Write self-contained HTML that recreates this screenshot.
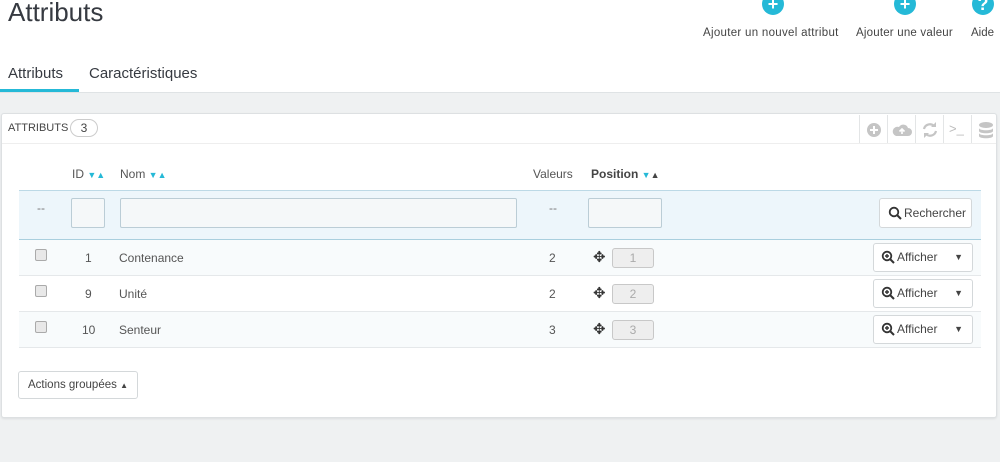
<!DOCTYPE html>
<html><head><meta charset="utf-8"><style>
*{box-sizing:border-box;margin:0;padding:0}
body{width:1000px;height:462px;overflow:hidden;background:#eff1f2;font-family:"Liberation Sans",sans-serif;color:#555;position:relative;font-size:12px}
.top{position:absolute;left:0;top:0;width:1000px;height:93px;background:#fff;border-bottom:1px solid #dfe3e5}
.a{position:absolute;white-space:nowrap}
h1{position:absolute;left:8px;top:-3px;font-size:26px;font-weight:normal;color:#363a41}
.tb{font-size:11.5px;color:#444}
.ic{position:absolute;width:22px;height:22px;border-radius:50%;background:#25b9d7;color:#fff;font-weight:bold;text-align:center;line-height:22px;font-size:18px}
.tab{font-size:15px;color:#363a41}
.panel{position:absolute;left:1px;top:113px;width:996px;height:305px;background:#fff;border:1px solid #dde0e2;border-radius:3px;box-shadow:0 1px 2px rgba(0,0,0,.08)}
.inp{position:absolute;background:#f5f8f9;border:1px solid #bbcdd6;border-radius:2px;height:30px}
.row{position:absolute;left:17px;width:962px;height:36px;border-bottom:1px solid #e5e8ea}
.cb{position:absolute;width:12px;height:12px;border:1px solid #aaa;border-radius:2px;background:#e8e8e8}
.pos{position:absolute;width:42px;height:20px;border:1px solid #c8c8c8;border-radius:3px;background:#eee;color:#aaa;text-align:center;line-height:18px}
.btn{position:absolute;border:1px solid #d4d8da;border-radius:3px;background:#fff;color:#444;font-size:12px}
.hi{position:absolute;width:28px;height:28px;border-left:1px solid #e3e5e6;top:1px;color:#bbb}
.mg{vertical-align:-3px;margin-right:2px}
</style></head><body>
<div class="top">
<h1>Attributs</h1>
<div class="ic" style="left:762px;top:-7px">+</div>
<div class="ic" style="left:894px;top:-7px">+</div>
<div class="ic" style="left:972px;top:-7px">?</div>
<div class="a tb" style="left:703px;top:27px;letter-spacing:0.3px">Ajouter un nouvel attribut</div>
<div class="a tb" style="left:856px;top:27px;letter-spacing:0.2px">Ajouter une valeur</div>
<div class="a tb" style="left:971px;top:27px">Aide</div>
<div class="a tab" style="left:8px;top:65px">Attributs</div>
<div class="a tab" style="left:89px;top:65px">Caractéristiques</div>
<div class="a" style="left:0;top:89px;width:79px;height:3px;background:#25b9d7"></div>
</div>
<div class="panel">
<div class="a" style="left:0;top:0;width:994px;height:30px;border-bottom:1px solid #eee"></div>
<div class="a" style="left:6px;top:8px;font-size:11px;color:#444">ATTRIBUTS</div>
<div class="a" style="left:68px;top:5px;width:28px;height:18px;border:1px solid #ccc;border-radius:9px;text-align:center;line-height:16px;color:#444;font-size:12px">3</div>
<div class="hi" style="left:857px"><svg width="28" height="28"><circle cx="14" cy="15" r="7" fill="#c5c5c5"/><path d="M14 11v8M10 15h8" stroke="#fff" stroke-width="2"/></svg></div>
<div class="hi" style="left:885px"><svg width="28" height="28"><path d="M8 21h12a4 4 0 0 0 0-8a5 5 0 0 0-9-1a4 4 0 0 0-3 9z" fill="#c5c5c5"/><path d="M14 19v-5M11.5 16.5l2.5-2.5 2.5 2.5" stroke="#fff" stroke-width="1.6" fill="none"/></svg></div>
<div class="hi" style="left:913px"><svg width="28" height="28"><path d="M8 14a6 6 0 0 1 10-3M20 16a6 6 0 0 1-10 3" stroke="#c5c5c5" stroke-width="2.2" fill="none"/><path d="M20 7v5h-5M8 23v-5h5" fill="#c5c5c5"/></svg></div>
<div class="hi" style="left:941px;font-size:13px;line-height:28px;padding-left:5px">&gt;_</div>
<div class="hi" style="left:969px"><svg width="28" height="28"><ellipse cx="14" cy="10" rx="7" ry="3" fill="#c5c5c5"/><path d="M7 13c0 3 14 3 14 0v3c0 3-14 3-14 0zM7 18c0 3 14 3 14 0v3c0 3-14 3-14 0z" fill="#c5c5c5"/></svg></div>

<div class="a" style="left:70px;top:53px;color:#555">ID <span style="color:#25b9d7;font-size:9px">▼▲</span></div>
<div class="a" style="left:118px;top:53px;color:#555">Nom <span style="color:#25b9d7;font-size:9px">▼▲</span></div>
<div class="a" style="left:531px;top:53px;color:#555">Valeurs</div>
<div class="a" style="left:589px;top:53px;color:#444;font-weight:bold">Position <span style="font-size:9px"><span style="color:#25b9d7">▼</span>▲</span></div>
<div class="a" style="left:17px;top:76px;width:962px;height:50px;background:#edf6fb;border-top:1px solid #bcd9e6;border-bottom:1px solid #a9cfde"></div>
<div class="a" style="left:35px;top:87px;color:#777">--</div>
<div class="inp" style="left:69px;top:84px;width:34px"></div>
<div class="inp" style="left:118px;top:84px;width:397px"></div>
<div class="a" style="left:547px;top:87px;color:#777">--</div>
<div class="inp" style="left:586px;top:84px;width:74px"></div>
<div class="btn" style="left:877px;top:84px;width:93px;height:30px;line-height:28px;padding-left:8px"><svg class="mg" width="14" height="14"><circle cx="6" cy="6" r="4.3" stroke="#333" stroke-width="1.8" fill="none"/><path d="M9 9l4 4" stroke="#333" stroke-width="2"/></svg>Rechercher</div>

<div class="row" style="top:126px;background:#f8fbfc"></div>
<div class="row" style="top:162px"></div>
<div class="row" style="top:198px;background:#f8fbfc"></div>

<div class="cb" style="left:33px;top:135px"></div>
<div class="a" style="left:83px;top:137px">1</div>
<div class="a" style="left:117px;top:137px">Contenance</div>
<div class="a" style="left:547px;top:137px">2</div>
<div class="a" style="left:591px;top:134px;font-size:15px;color:#333">✥</div>
<div class="pos" style="left:610px;top:134px">1</div>
<div class="btn" style="left:871px;top:129px;width:100px;height:29px;line-height:27px;padding-left:7px"><svg class="mg" width="14" height="14"><circle cx="6" cy="6" r="4.3" stroke="#333" stroke-width="1.8" fill="none"/><path d="M6 4v4M4 6h4" stroke="#333" stroke-width="1.4"/><path d="M9 9l4 4" stroke="#333" stroke-width="2"/></svg>Afficher <span style="position:absolute;right:9px;font-size:9px">▼</span></div>

<div class="cb" style="left:33px;top:171px"></div>
<div class="a" style="left:83px;top:173px">9</div>
<div class="a" style="left:117px;top:173px">Unité</div>
<div class="a" style="left:547px;top:173px">2</div>
<div class="a" style="left:591px;top:170px;font-size:15px;color:#333">✥</div>
<div class="pos" style="left:610px;top:170px">2</div>
<div class="btn" style="left:871px;top:165px;width:100px;height:29px;line-height:27px;padding-left:7px"><svg class="mg" width="14" height="14"><circle cx="6" cy="6" r="4.3" stroke="#333" stroke-width="1.8" fill="none"/><path d="M6 4v4M4 6h4" stroke="#333" stroke-width="1.4"/><path d="M9 9l4 4" stroke="#333" stroke-width="2"/></svg>Afficher <span style="position:absolute;right:9px;font-size:9px">▼</span></div>

<div class="cb" style="left:33px;top:207px"></div>
<div class="a" style="left:80px;top:209px">10</div>
<div class="a" style="left:117px;top:209px">Senteur</div>
<div class="a" style="left:547px;top:209px">3</div>
<div class="a" style="left:591px;top:206px;font-size:15px;color:#333">✥</div>
<div class="pos" style="left:610px;top:206px">3</div>
<div class="btn" style="left:871px;top:201px;width:100px;height:29px;line-height:27px;padding-left:7px"><svg class="mg" width="14" height="14"><circle cx="6" cy="6" r="4.3" stroke="#333" stroke-width="1.8" fill="none"/><path d="M6 4v4M4 6h4" stroke="#333" stroke-width="1.4"/><path d="M9 9l4 4" stroke="#333" stroke-width="2"/></svg>Afficher <span style="position:absolute;right:9px;font-size:9px">▼</span></div>

<div class="btn" style="left:16px;top:257px;width:120px;height:28px;line-height:26px;padding-left:9px;font-size:11.5px">Actions groupées <span style="font-size:8px">▲</span></div>
</div>
</body></html>
